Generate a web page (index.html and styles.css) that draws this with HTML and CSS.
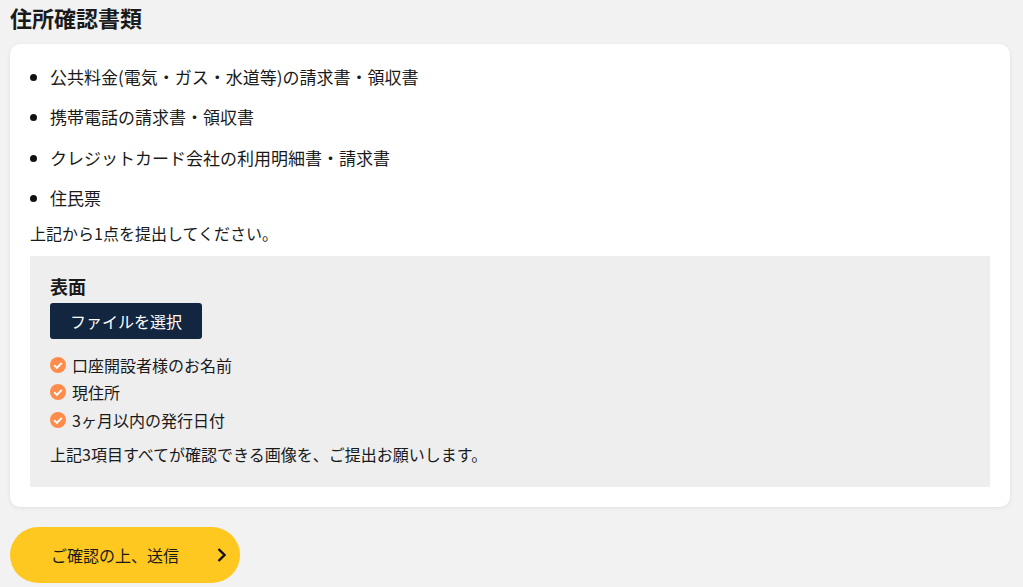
FILE: index.html
```html
<!DOCTYPE html>
<html lang="ja">
<head>
<meta charset="utf-8">
<title>住所確認書類</title>
<link rel="stylesheet" href="styles.css">
</head>
<body>
<h2 class="title">住所確認書類</h2>
<section class="card">
  <ul class="docs">
    <li>公共料金(電気・ガス・水道等)の請求書・領収書</li>
    <li>携帯電話の請求書・領収書</li>
    <li>クレジットカード会社の利用明細書・請求書</li>
    <li>住民票</li>
  </ul>
  <p class="note">上記から1点を提出してください。</p>
  <div class="upload">
    <h3 class="side">表面</h3>
    <button class="file" type="button">ファイルを選択</button>
    <ul class="checks">
      <li><svg class="check" viewBox="0 0 16 16"><circle cx="8" cy="8" r="8" fill="#ff8c4b"/><path d="M4.2 8.2l2.7 2.7 4.9-5" fill="none" stroke="#fff" stroke-width="2"/></svg>口座開設者様のお名前</li>
      <li><svg class="check" viewBox="0 0 16 16"><circle cx="8" cy="8" r="8" fill="#ff8c4b"/><path d="M4.2 8.2l2.7 2.7 4.9-5" fill="none" stroke="#fff" stroke-width="2"/></svg>現住所</li>
      <li><svg class="check" viewBox="0 0 16 16"><circle cx="8" cy="8" r="8" fill="#ff8c4b"/><path d="M4.2 8.2l2.7 2.7 4.9-5" fill="none" stroke="#fff" stroke-width="2"/></svg>3ヶ月以内の発行日付</li>
    </ul>
    <p class="hint">上記3項目すべてが確認できる画像を、ご提出お願いします。</p>
  </div>
</section>
<button class="submit" type="button"><span>ご確認の上、送信</span><svg class="chev" viewBox="0 0 10 16"><path d="M2.5 2l6 6-6 6" fill="none" stroke="#111" stroke-width="2.3"/></svg></button>
</body>
</html>
```
FILE: styles.css
```css
* { box-sizing: border-box; }
html, body { margin: 0; height: 587px; overflow: hidden; }
body {
  background: #f2f2f2;
  color: #1a1a1a;
  font-family: "Noto Sans CJK JP", "Noto Sans", sans-serif;
  font-size: 16px;
  padding: 0 13px 0 10px;
}
.title { margin: 0; height: 44px; font-size: 22px; line-height: 34px; font-weight: 700; }
.card { background: #fff; border-radius: 10px; height: 463px; padding: 14px 20px 20px; box-shadow: 0 1px 4px rgba(0,0,0,.08); }
.docs { margin: 0; padding: 0 0 0 20px; list-style: none; }
.docs li { position: relative; height: 40.3px; line-height: 40px; font-size: 17px; }
.docs li:first-child { margin-top: -1px; }
.docs li::before { content: ""; position: absolute; left: -20px; top: 17px; width: 7px; height: 7px; border-radius: 50%; background: #111; }
.note { margin: 0; font-size: 16px; line-height: 30px; height: 28px; }
.upload { background: #eee; height: 231px; margin-top: 10px; padding: 18px 20px; }
.side { margin: 0; font-size: 18px; line-height: 24px; font-weight: 700; }
.file { display: block; width: 152px; height: 36px; margin-top: 5px; background: #12263f; color: #fff; border: 0; border-radius: 3px; font: 400 16px/35px "Noto Sans CJK JP", sans-serif; }
.checks { list-style: none; margin: 12px 0 0; padding: 0; }
.checks li { display: flex; align-items: center; gap: 6px; height: 27.5px; font-size: 16px; }
.check { width: 16px; height: 16px; flex: none; }
.hint { margin: 5px 0 0; font-size: 16px; line-height: 30px; }
.submit { display: flex; align-items: center; justify-content: space-between; width: 230px; height: 56px; margin-top: 20px; padding: 0 14px 0 41px; border: 0; border-radius: 28px; background: #ffc820; color: #1a1a1a; font: 400 16px "Noto Sans CJK JP", sans-serif; }
.chev { width: 10px; height: 16px; }
```
